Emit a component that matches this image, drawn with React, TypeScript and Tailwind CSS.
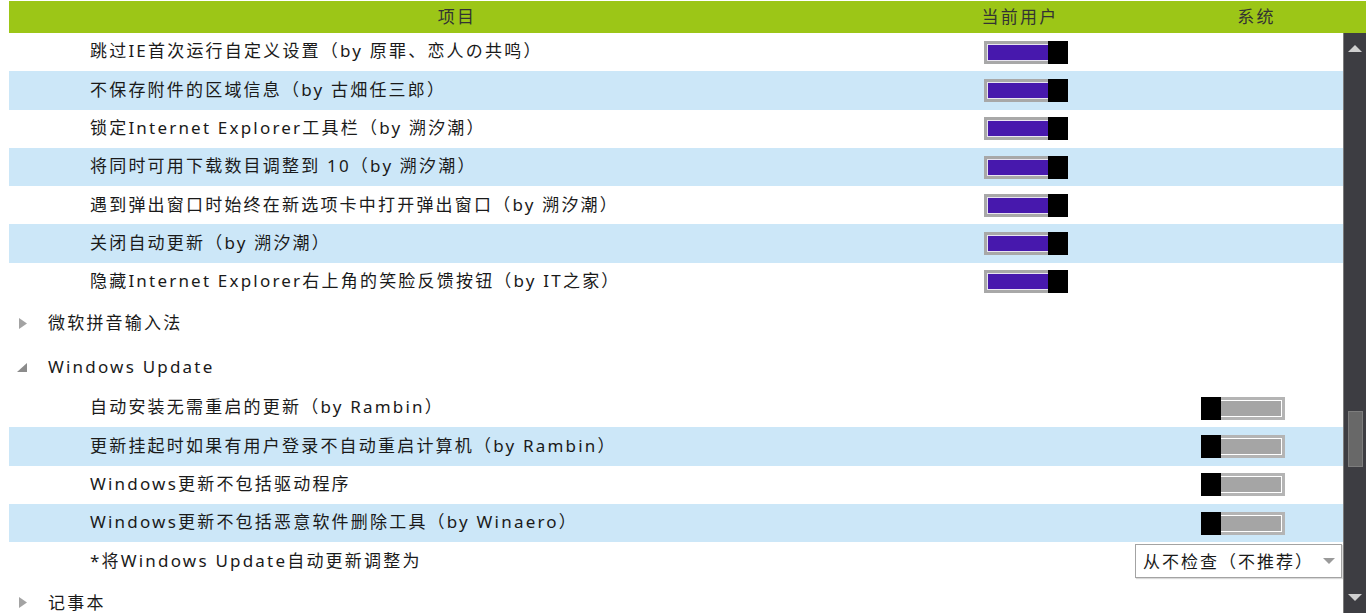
import React from 'react';

type Row =
    | { kind: 'item'; text: string; user?: boolean; system?: boolean }
    | { kind: 'select'; text: string; value: string }
    | { kind: 'group'; text: string; open: boolean };

const rows: Row[] = [
    { kind: 'item', text: '跳过IE首次运行自定义设置（by 原罪、恋人の共鸣）', user: true },
    { kind: 'item', text: '不保存附件的区域信息（by 古畑任三郎）', user: true },
    { kind: 'item', text: '锁定Internet Explorer工具栏（by 溯汐潮）', user: true },
    { kind: 'item', text: '将同时可用下载数目调整到 10（by 溯汐潮）', user: true },
    { kind: 'item', text: '遇到弹出窗口时始终在新选项卡中打开弹出窗口（by 溯汐潮）', user: true },
    { kind: 'item', text: '关闭自动更新（by 溯汐潮）', user: true },
    { kind: 'item', text: '隐藏Internet Explorer右上角的笑脸反馈按钮（by IT之家）', user: true },
    { kind: 'group', text: '微软拼音输入法', open: false },
    { kind: 'group', text: 'Windows Update', open: true },
    { kind: 'item', text: '自动安装无需重启的更新（by Rambin）', system: false },
    { kind: 'item', text: '更新挂起时如果有用户登录不自动重启计算机（by Rambin）', system: false },
    { kind: 'item', text: 'Windows更新不包括驱动程序', system: false },
    { kind: 'item', text: 'Windows更新不包括恶意软件删除工具（by Winaero）', system: false },
    { kind: 'select', text: '*将Windows Update自动更新调整为', value: '从不检查（不推荐）' },
    { kind: 'group', text: '记事本', open: false },
];

// Metro style toggle: black thumb on the right when on, left when off
const Toggle = ({ on }: { on: boolean }) => {
    if (on) {
        return (
            <div className="flex h-[23px] w-[84px]">
                <div className="flex-1 border-[3px] border-r-0 border-[#a8a8a8] bg-[#a8a8a8]">
                    <div className="h-full w-full border border-r-0 border-[#e8e4f0] bg-[#4718ad]" />
                </div>
                <div className="w-[20px] bg-black" />
            </div>
        );
    }
    return (
        <div className="flex h-[23px] w-[84px]">
            <div className="w-[20px] bg-black" />
            <div className="flex-1 border-[3px] border-l-0 border-[#b4b4b4] bg-[#a5a5a5]">
                <div className="h-full w-full border border-l-0 border-white bg-[#a5a5a5]" />
            </div>
        </div>
    );
};

const GroupArrow = ({ open }: { open: boolean }) =>
    open ? (
        <svg width="10" height="10" viewBox="0 0 10 10" className="ml-[8px] mt-[2px]">
            <polygon points="10,0 10,9 0,9" fill="#8c8c8c" />
        </svg>
    ) : (
        <svg width="9" height="11" viewBox="0 0 9 11" className="ml-[10px]">
            <polygon points="0,0 8,5.5 0,11" fill="#a3a3a3" />
        </svg>
    );

export default function App() {
    let stripe = 0;

    return (
        <div
            className="h-[613px] w-[1366px] overflow-hidden bg-white text-[17px] tracking-[2.2px] text-[#1a1a1a]"
            style={{ fontFamily: '"Noto Sans", "Noto Sans CJK SC", sans-serif' }}
        >
            {/* Header */}
            <div className="ml-[9px] mt-[1px] flex h-[32px] items-center bg-[#9cc617] text-[#333]">
                <div className="w-[896px] text-center">项目</div>
                <div className="w-[230px] text-center">当前用户</div>
                <div className="flex-1 pl-[12px] text-center">系统</div>
            </div>

            <div className="flex h-[580px]">
                <div className="w-[9px]" />

                {/* List */}
                <div className="w-[1334px] overflow-hidden">
                    {rows.map((row, i) => {
                        if (row.kind === 'group') {
                            stripe = 0;
                            return (
                                <div key={i} className="flex h-[44px] items-center">
                                    <div className="w-[39px]">
                                        <GroupArrow open={row.open} />
                                    </div>
                                    <span>{row.text}</span>
                                </div>
                            );
                        }
                        const blue = stripe % 2 === 1;
                        stripe++;
                        return (
                            <div
                                key={i}
                                className={`flex h-[38.3px] items-center ${blue ? 'bg-[#cce7f8]' : 'bg-white'}`}
                            >
                                <div className="w-[975px] whitespace-nowrap pl-[81px] pb-[2px]">{row.text}</div>
                                {row.kind === 'item' ? (
                                    <>
                                        <div className="w-[217px]">
                                            {row.user !== undefined && <Toggle on={row.user} />}
                                        </div>
                                        <div className="flex-1">
                                            {row.system !== undefined && <Toggle on={row.system} />}
                                        </div>
                                    </>
                                ) : (
                                    <div className="flex flex-1 justify-end pr-[1px]">
                                        <div className="flex h-[34px] w-[207px] items-center justify-between border border-[#a3a3a3] bg-white pl-[7px] pr-[6px] shadow-[1px_1px_1px_rgba(0,0,0,0.15)]">
                                            <span className="whitespace-nowrap tracking-[2px]">{row.value}</span>
                                            <svg width="12" height="7" viewBox="0 0 12 7">
                                                <polygon points="0,0 12,0 6,6" fill="#9a9a9a" />
                                            </svg>
                                        </div>
                                    </div>
                                )}
                            </div>
                        );
                    })}
                </div>

                {/* Scrollbar */}
                <div className="flex w-[23px] flex-col border-l border-[#7c7c7c] bg-[#3d3d42]">
                    <div className="flex h-[20px] items-end justify-center pb-[1px]">
                        <svg width="14" height="7" viewBox="0 0 14 7">
                            <polygon points="7,0 14,7 0,7" fill="#cfcfcf" />
                        </svg>
                    </div>
                    <div className="flex-1">
                        <div className="mx-auto mt-[358px] h-[56px] w-[15px] border border-[#7d7d7d] bg-[#686868]" />
                    </div>
                    <div className="flex h-[20px] items-start justify-center pt-[1px]">
                        <svg width="14" height="7" viewBox="0 0 14 7">
                            <polygon points="0,0 14,0 7,7" fill="#cfcfcf" />
                        </svg>
                    </div>
                </div>
            </div>
        </div>
    );
}
